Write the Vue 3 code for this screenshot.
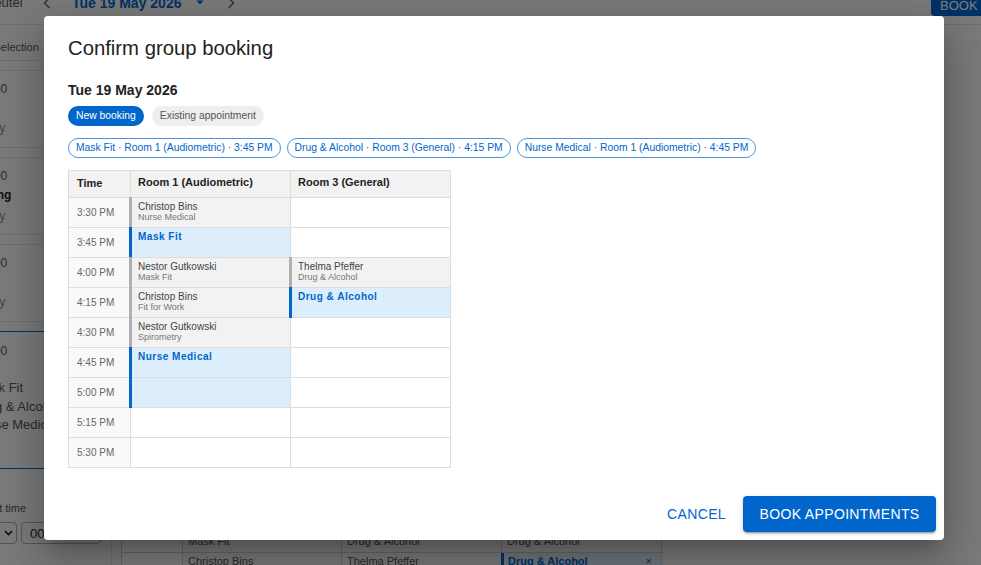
<template>
  <div class="page">
    <!-- Page behind the dialog -->
    <header class="top-bar">
      <span class="site-name">Deutel</span>
      <svg class="nav-icon first" width="8" height="12" viewBox="0 0 8 12"><path d="M6.5 1 1.5 6l5 5" /></svg>
      <span class="top-date">Tue 19 May 2026</span>
      <svg class="caret" width="8" height="5" viewBox="0 0 8 5"><path d="M0.5 0.5h7L4 4.5z" /></svg>
      <svg class="nav-icon" width="8" height="12" viewBox="0 0 8 12"><path d="M1.5 1l5 5-5 5" /></svg>
      <button class="top-book">BOOK</button>
    </header>

    <div class="page-body">
      <aside class="sidebar">
        <div class="selection-head">Clear selection</div>
        <div class="slot" v-for="slot in slots" :key="slot.time" :class="{ picked: slot.items }">
          <div class="slot-time">3:30 – 5:00</div>
          <div v-if="slot.title" class="slot-title">Morning</div>
          <div v-if="!slot.items" class="slot-sub">Availability</div>
          <div v-for="item in slot.items" :key="item" class="slot-item">{{ item }}</div>
        </div>
        <div class="start-time">
          <span class="start-label">Start time</span>
          <div class="selects">
            <div class="select-box hour">
              <svg width="9" height="6" viewBox="0 0 9 6"><path d="M1 1l3.5 3.5L8 1" /></svg>
            </div>
            <div class="select-box minute">00</div>
          </div>
        </div>
      </aside>

      <main class="main-area">
        <div class="back-table">
          <div class="back-row first-row">
            <div class="back-cell time-col"></div>
            <div class="back-cell">Mask Fit</div>
            <div class="back-cell">Drug &amp; Alcohol</div>
            <div class="back-cell">Drug &amp; Alcohol</div>
          </div>
          <div class="back-row">
            <div class="back-cell time-col"></div>
            <div class="back-cell">Christop Bins</div>
            <div class="back-cell">Thelma Pfeffer</div>
            <div class="back-cell back-new">
              <span>Drug &amp; Alcohol</span>
              <span class="remove">×</span>
            </div>
          </div>
        </div>
      </main>
    </div>

    <div class="backdrop"></div>

    <!-- Dialog -->
    <section class="dialog">
      <h2 class="dialog-title">Confirm group booking</h2>
      <h3 class="dialog-date">Tue 19 May 2026</h3>

      <div class="legend">
        <span class="legend-pill new">New booking</span>
        <span class="legend-pill existing">Existing appointment</span>
      </div>

      <div class="requests">
        <span class="request-chip" v-for="chip in chips" :key="chip">{{ chip }}</span>
      </div>

      <div class="schedule">
        <div class="head-cell time-head">Time</div>
        <div class="head-cell">Room 1 (Audiometric)</div>
        <div class="head-cell">Room 3 (General)</div>

        <template v-for="row in rows" :key="row.time">
          <div class="time-cell">{{ row.time }}</div>
          <div
            v-for="(cell, i) in row.cells"
            :key="i"
            class="room-cell"
            :class="cell ? cell.type : ''"
          >
            <template v-if="cell && cell.type === 'busy'">
              <div class="person">{{ cell.name }}</div>
              <div class="service">{{ cell.service }}</div>
            </template>
            <div v-else-if="cell && cell.label" class="new-label">{{ cell.label }}</div>
          </div>
        </template>
      </div>

      <footer class="actions">
        <button class="cancel-btn">CANCEL</button>
        <button class="book-btn">BOOK APPOINTMENTS</button>
      </footer>
    </section>
  </div>
</template>

<script setup>
const slots = [
  { time: 'a' },
  { time: 'b', title: true },
  { time: 'c' },
  { time: 'd', items: ['Mask Fit', 'Drug & Alcohol', 'Nurse Medical'] }
]

const chips = [
  'Mask Fit · Room 1 (Audiometric) · 3:45 PM',
  'Drug & Alcohol · Room 3 (General) · 4:15 PM',
  'Nurse Medical · Room 1 (Audiometric) · 4:45 PM'
]

const busy = (name, service) => ({ type: 'busy', name, service })
const booked = (label) => ({ type: 'new', label })

const rows = [
  { time: '3:30 PM', cells: [busy('Christop Bins', 'Nurse Medical'), null] },
  { time: '3:45 PM', cells: [booked('Mask Fit'), null] },
  { time: '4:00 PM', cells: [busy('Nestor Gutkowski', 'Mask Fit'), busy('Thelma Pfeffer', 'Drug & Alcohol')] },
  { time: '4:15 PM', cells: [busy('Christop Bins', 'Fit for Work'), booked('Drug & Alcohol')] },
  { time: '4:30 PM', cells: [busy('Nestor Gutkowski', 'Spirometry'), null] },
  { time: '4:45 PM', cells: [booked('Nurse Medical'), null] },
  { time: '5:00 PM', cells: [booked(''), null] },
  { time: '5:15 PM', cells: [null, null] },
  { time: '5:30 PM', cells: [null, null] }
]
</script>

<style>
html, body {
  margin: 0;
  overflow: hidden;
}
</style>

<style scoped>
.page {
  position: relative;
  width: 981px;
  height: 565px;
  overflow: hidden;
  background: #f5f5f5;
  font-family: "Liberation Sans", Arial, sans-serif;
  color: #222;
}

/* background page */
.top-bar {
  display: flex;
  align-items: flex-start;
  height: 24px;
  border-bottom: 1px solid #ddd;
  font-size: 14px;
  line-height: 16px;
}

.site-name {
  margin: -5px 0 0 -15px;
  width: 55px;
  color: #555;
  font-size: 13px;
}

.nav-icon {
  margin-top: -3px;
  fill: none;
  stroke: #666;
  stroke-width: 1.5;
}

.nav-icon.first {
  margin-left: 3px;
}

.top-date {
  margin: -5px 0 0 21px;
  color: #0066cc;
  font-weight: 700;
}

.caret {
  margin: 0 23px 0 15px;
  fill: #0066cc;
}

.top-book {
  margin: -12px 0 0 auto;
  width: 50px;
  height: 28px;
  padding: 7px 0 0 9px;
  border: none;
  border-radius: 4px 0 0 4px;
  background: #0066cc;
  color: #fff;
  font: 13px/14px "Liberation Sans", Arial, sans-serif;
  text-align: left;
  white-space: nowrap;
  overflow: hidden;
}

.page-body {
  display: flex;
  height: 540px;
}

.sidebar {
  flex: none;
  width: 111px;
  border-right: 1px solid #ddd;
  overflow: hidden;
  font-size: 12px;
  color: #555;
}

.selection-head {
  margin: 8px 0 9px -34px;
  padding: 7px 0 6px;
  height: 14px;
  line-height: 14px;
  width: 160px;
  box-sizing: content-box;
  border-bottom: 1px solid #ddd;
  font-size: 11px;
}

.slot {
  height: 78px;
  margin-bottom: 9px;
  padding-top: 11px;
  box-sizing: border-box;
  border-top: 1px solid #ddd;
  border-bottom: 1px solid #ddd;
}

.slot.picked {
  height: 138px;
  margin-bottom: 13px;
  padding-top: 12px;
  border-color: #0066cc;
}

.slot-time {
  margin-left: -53px;
  line-height: 14px;
  font-size: 12px;
}

.slot-sub {
  margin: 25px 0 0 -51px;
  font-size: 12px;
  color: #888;
  line-height: 14px;
}

.slot-title {
  margin: 5px 0 -18px -36px;
  font-weight: 700;
  color: #222;
  line-height: 14px;
}

.slot-item {
  margin-left: -26px;
  line-height: 18.5px;
  font-size: 13px;
  white-space: nowrap;
}

.slot-time + .slot-item {
  margin-top: 21px;
}

.start-time {
  padding-top: 20px;
}

.start-label {
  display: block;
  margin-left: -21px;
  font-size: 11px;
  line-height: 13px;
}

.selects {
  display: flex;
  gap: 4px;
  margin-top: 7px;
}

.select-box {
  display: flex;
  align-items: center;
  height: 20px;
  border: 1px solid #aaa;
  border-radius: 4px;
  box-sizing: content-box;
  font-size: 13px;
}

.select-box svg {
  fill: none;
  stroke: #222;
  stroke-width: 1.6;
  margin-left: 24px;
}

.select-box.hour {
  width: 36px;
  margin-left: -21px;
}

.select-box.minute {
  width: 70px;
  padding-left: 8px;
  color: #222;
}

.main-area {
  flex: 1;
  padding: 498px 0 0 9px;
  overflow: hidden;
}

.back-table {
  width: 541px;
  border-left: 1px solid #ccc;
  font-size: 11px;
  color: #555;
}

.back-row {
  display: grid;
  grid-template-columns: 61px 159px 160px 160px;
  height: 30px;
  border-bottom: 1px solid #ccc;
  box-sizing: border-box;
}

.back-cell {
  display: flex;
  justify-content: space-between;
  padding: 2px 9px 0 5px;
  border-right: 1px solid #ccc;
  background: #f2f2f2;
  line-height: 13px;
}

.first-row .back-cell {
  padding-top: 12px;
}

.time-col {
  background: #fafafa;
}

.back-new {
  border-left: 3px solid #0066cc;
  margin-left: -1px;
  padding-left: 4px;
  background: #dcedfb;
  color: #0066cc;
  font-weight: 700;
}

.remove {
  font-weight: 400;
}

.backdrop {
  position: absolute;
  inset: 0;
  background: rgba(0, 0, 0, 0.5);
}

/* dialog */
.dialog {
  position: absolute;
  top: 16px;
  left: 44px;
  display: flex;
  flex-direction: column;
  width: 900px;
  height: 524px;
  box-sizing: border-box;
  padding: 20px 8px 8px 24px;
  background: #fff;
  border-radius: 4px;
  box-shadow: 0 11px 15px -7px rgba(0, 0, 0, 0.2), 0 24px 38px 3px rgba(0, 0, 0, 0.14), 0 9px 46px 8px rgba(0, 0, 0, 0.12);
}

.dialog-title {
  margin: 0;
  font-size: 20.3px;
  font-weight: 400;
  line-height: 24px;
  color: #222;
}

.dialog-date {
  margin: 22px 0 0;
  font-size: 14px;
  font-weight: 700;
  line-height: 16px;
  color: #222;
}

.legend {
  display: flex;
  gap: 8px;
  margin-top: 8px;
}

.legend-pill {
  height: 20px;
  padding: 0 8px;
  border-radius: 10px;
  font-size: 10.35px;
  line-height: 20px;
}

.legend-pill.new {
  background: #0066cc;
  color: #fff;
}

.legend-pill.existing {
  background: #eeeeee;
  color: #555;
}

.requests {
  display: flex;
  gap: 6px;
  margin-top: 12px;
}

.request-chip {
  height: 20px;
  box-sizing: border-box;
  padding: 0 7px;
  border: 1px solid #4a94dc;
  border-radius: 10px;
  color: #0066cc;
  font-size: 10.35px;
  line-height: 17px;
}

.schedule {
  display: grid;
  grid-template-columns: 62px 160px 160px;
  grid-template-rows: 27px;
  grid-auto-rows: 30px;
  width: 383px;
  margin-top: 12px;
  border-top: 1px solid #ddd;
  border-left: 1px solid #ddd;
  box-sizing: border-box;
}

.head-cell {
  box-sizing: border-box;
  padding: 5px 7px 0;
  background: #f2f2f2;
  border-right: 1px solid #ddd;
  border-bottom: 1px solid #ddd;
  font-size: 11px;
  font-weight: 700;
  line-height: 13px;
  color: #222;
}

.time-head {
  padding: 6px 8px 0;
}

.time-cell {
  display: flex;
  align-items: center;
  padding-left: 8px;
  background: #f9f9f9;
  border-right: 1px solid #ddd;
  border-bottom: 1px solid #ddd;
  font-size: 10px;
  color: #666;
}

.room-cell {
  position: relative;
  box-sizing: border-box;
  padding: 3px 7px 0;
  border-right: 1px solid #ddd;
  border-bottom: 1px solid #ddd;
}

.room-cell.busy {
  background: #f2f2f2;
}

.room-cell.new {
  background: #dcedfb;
}

.room-cell.busy::before,
.room-cell.new::before {
  content: "";
  position: absolute;
  top: -1px;
  bottom: -1px;
  left: -2px;
  width: 3px;
  background: #b0b0b0;
}

.room-cell.new::before {
  background: #0066cc;
}

.person {
  font-size: 10px;
  line-height: 11px;
  color: #444;
}

.service {
  font-size: 9px;
  line-height: 11px;
  color: #777;
}

.new-label {
  font-size: 10px;
  font-weight: 700;
  line-height: 11px;
  letter-spacing: 0.5px;
  color: #0066cc;
}

.actions {
  display: flex;
  justify-content: flex-end;
  align-items: center;
  gap: 8px;
  margin-top: auto;
}

.cancel-btn,
.book-btn {
  height: 36px;
  border: none;
  border-radius: 4px;
  font: 14px/36px "Liberation Sans", Arial, sans-serif;
  letter-spacing: 0.35px;
}

.cancel-btn {
  padding: 0 9px;
  background: none;
  color: #0066cc;
}

.book-btn {
  width: 193px;
  padding: 0;
  background: #0066cc;
  color: #fff;
  box-shadow: 0 3px 1px -2px rgba(0, 0, 0, 0.2), 0 2px 2px rgba(0, 0, 0, 0.14), 0 1px 5px rgba(0, 0, 0, 0.12);
}
</style>
